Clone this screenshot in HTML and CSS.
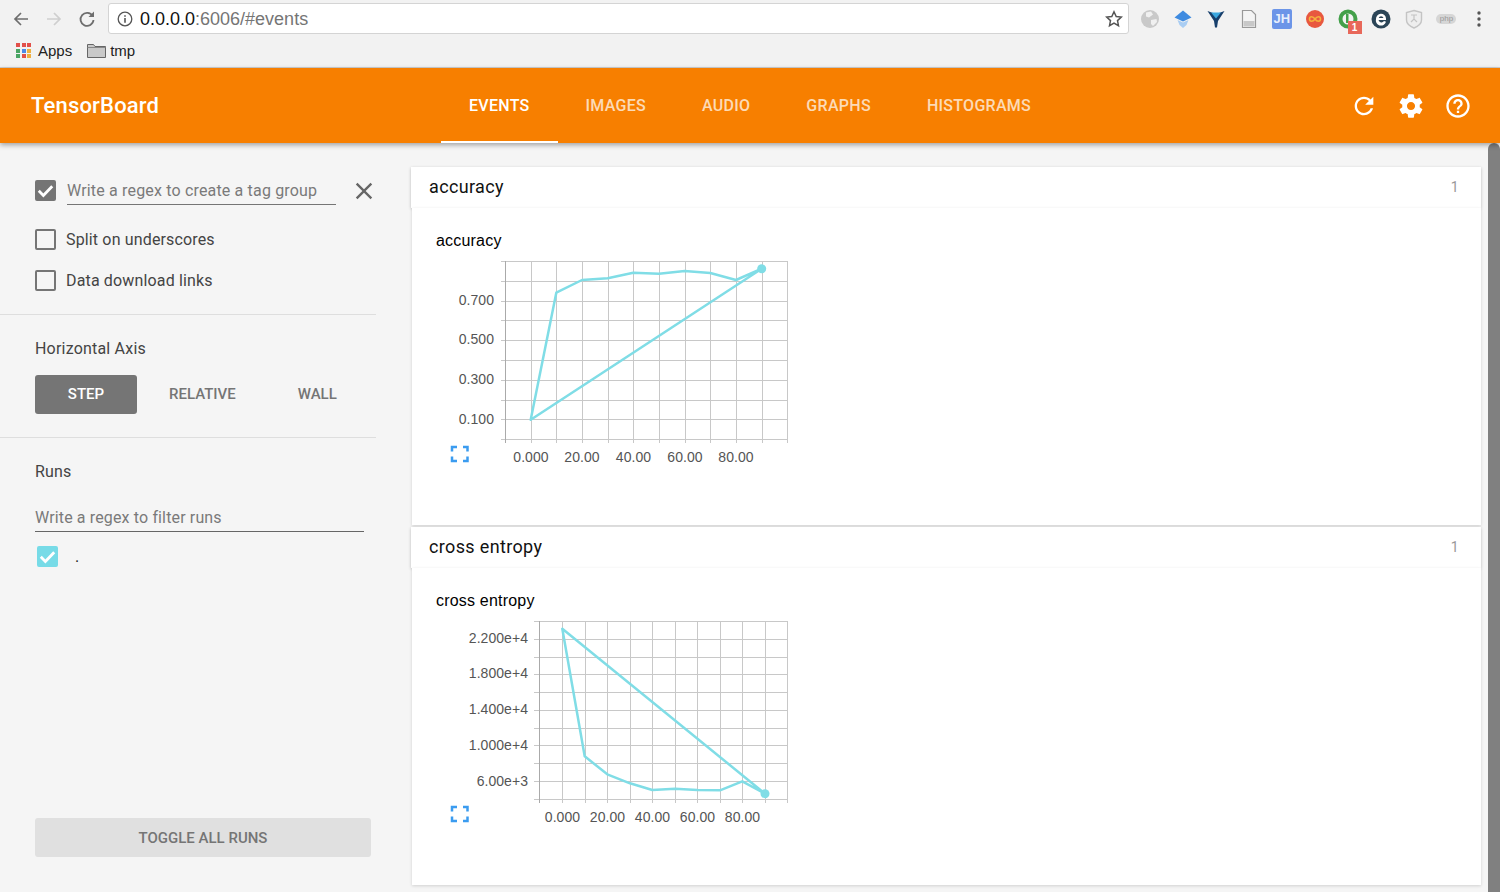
FILE: index.html
```html
<!DOCTYPE html>
<html lang="en">
<head>
<meta charset="utf-8">
<title>TensorBoard</title>
<link rel="stylesheet" href="styles.css">
</head>
<body>
<div class="browser">
  <div class="toolbar">
    <div class="nav">
      <svg class="nav-icon" viewBox="0 0 18 18"><path d="M16 9H3M9 3L3 9l6 6" fill="none" stroke="#6e6e6e" stroke-width="1.7"/></svg>
      <svg class="nav-icon" viewBox="0 0 18 18"><path d="M2 9h13M9 3l6 6-6 6" fill="none" stroke="#cfcfcf" stroke-width="1.7"/></svg>
      <svg class="nav-icon" viewBox="0 0 18 18"><path d="M14.6 6A6.5 6.5 0 1 0 15.5 10" fill="none" stroke="#6e6e6e" stroke-width="1.8"/><path d="M16 1.5V7h-5.5z" fill="#6e6e6e"/></svg>
    </div>
    <div class="omnibox">
      <svg class="info" viewBox="0 0 16 16"><circle cx="8" cy="8" r="6.8" fill="none" stroke="#555" stroke-width="1.3"/><path d="M7.2 7h1.6v4.8H7.2zM7.2 4.2h1.6v1.6H7.2z" fill="#555"/></svg>
      <span class="url"><span class="host">0.0.0.0</span>:6006/#events</span>
      <svg class="star" viewBox="0 0 18 18"><path d="M9 1.8l2.2 4.7 5.1.6-3.8 3.5 1 5.1L9 13.2l-4.5 2.5 1-5.1-3.8-3.5 5.1-.6z" fill="none" stroke="#555" stroke-width="1.5"/></svg>
    </div>
    <div class="extensions">
      <svg class="ext" viewBox="0 0 20 20"><circle cx="10" cy="10" r="9" fill="#c9c9c9"/><path d="M6 3.500l5-1 2 3-4 3-3-1zM11 11l5.500-1 .5 3-4 4-2-2z" fill="#f0f0f0"/></svg>
      <svg class="ext" viewBox="0 0 20 20"><path d="M10 1.500l8.500 7-8.500 4-8.500-4z" fill="#3f8be0"/><path d="M4.500 11l5.500 2.500 5.500-2.500-2 5-3.500 3-3.500-3z" fill="#a9cdf3"/></svg>
      <svg class="ext" viewBox="0 0 20 20"><path d="M1.500 2l5.500 2 3 3 3-3 5.500-2-6.500 10-1 6.500h-2l-1-6.500z" fill="#173f6c"/><path d="M5 3.500h10l-5 6z" fill="#3aa7e0"/></svg>
      <svg class="ext" viewBox="0 0 20 20"><path d="M3.500 1.500h9l4 4v13h-13z" fill="#f4f4f4" stroke="#999" stroke-width="1.2"/><path d="M4.500 12h11v5.500h-11z" fill="#c8c8c8"/></svg>
      <span class="ext-jh">JH</span>
      <svg class="ext" viewBox="0 0 20 20"><circle cx="10" cy="10" r="9" fill="#e8583f"/><path d="M10 10c-2-3-5.500-3-5.500 0s3.500 3 5.500 0c2-3 5.500-3 5.500 0s-3.500 3-5.500 0z" fill="none" stroke="#f5b13d" stroke-width="1.6"/></svg>
      <span class="ext-badged">
        <svg class="ext" viewBox="0 0 20 20"><circle cx="10" cy="10" r="7.500" fill="none" stroke="#43a04a" stroke-width="4"/><path d="M8 5h2.500v9H8z" fill="#43a04a"/></svg>
        <span class="badge">1</span>
      </span>
      <svg class="ext" viewBox="0 0 20 20"><circle cx="10" cy="10" r="9.500" fill="#2b4557"/><path d="M5 10a5 5 0 0 1 10-.5V11H7.500a3 3 0 0 0 5.500 1l2 .8A5 5 0 0 1 5 10zm2.700-1h4.800a2.500 2.500 0 0 0-4.800 0z" fill="#fff"/></svg>
      <svg class="ext" viewBox="0 0 20 20"><path d="M10 1.500l7.500 2v7.500c0 4-4 6.500-7.500 8-3.500-1.500-7.500-4-7.500-8V3.500z" fill="#eee" stroke="#c4c4c4" stroke-width="1.400"/><path d="M7 6h6M10 6v4M7 13l3-3 3 3" fill="none" stroke="#c4c4c4" stroke-width="1.200"/></svg>
      <span class="ext-php">php</span>
      <svg class="ext" viewBox="0 0 20 20"><circle cx="10" cy="4" r="1.700" fill="#555"/><circle cx="10" cy="10" r="1.700" fill="#555"/><circle cx="10" cy="16" r="1.700" fill="#555"/></svg>
    </div>
  </div>
  <div class="bookmarks">
    <span class="bookmark">
      <span class="apps-grid">
        <i class="dot red"></i><i class="dot red"></i><i class="dot red"></i>
        <i class="dot green"></i><i class="dot blue"></i><i class="dot yellow"></i>
        <i class="dot green"></i><i class="dot red"></i><i class="dot yellow"></i>
      </span>
      Apps
    </span>
    <span class="bookmark folder-mark">
      <svg class="folder" viewBox="0 0 19 15"><path d="M.5 1.500h6l1.500 2h10.500v11H.5z" fill="#c9c9c9" stroke="#666"/><path d="M.5 4.500h18" stroke="#888"/></svg>
      tmp
    </span>
  </div>
</div>

<header class="app-header">
  <div class="brand">TensorBoard</div>
  <nav class="tabs">
    <a class="tab active">EVENTS</a>
    <a class="tab">IMAGES</a>
    <a class="tab">AUDIO</a>
    <a class="tab">GRAPHS</a>
    <a class="tab">HISTOGRAMS</a>
  </nav>
  <div class="header-actions">
    <svg class="action" viewBox="0 0 24 24"><path d="M17.65 6.35C16.2 4.9 14.21 4 12 4c-4.42 0-7.99 3.58-7.99 8s3.57 8 7.99 8c3.73 0 6.84-2.55 7.73-6h-2.08c-.82 2.33-3.04 4-5.65 4-3.31 0-6-2.69-6-6s2.69-6 6-6c1.66 0 3.14.69 4.22 1.78L13 11h7V4l-2.35 2.35z"/></svg>
    <svg class="action" viewBox="0 0 24 24"><path d="M19.43 12.98c.04-.32.07-.64.07-.98s-.03-.66-.07-.98l2.11-1.65c.19-.15.24-.42.12-.64l-2-3.46c-.12-.22-.39-.3-.61-.22l-2.49 1c-.52-.4-1.08-.73-1.69-.98l-.38-2.65C14.46 2.18 14.25 2 14 2h-4c-.25 0-.46.18-.49.42l-.38 2.65c-.61.25-1.17.59-1.69.98l-2.49-1c-.23-.09-.49 0-.61.22l-2 3.46c-.13.22-.07.49.12.64l2.11 1.65c-.04.32-.07.65-.07.98s.03.66.07.98l-2.11 1.65c-.19.15-.24.42-.12.64l2 3.46c.12.22.39.3.61.22l2.49-1c.52.4 1.08.73 1.69.98l.38 2.65c.03.24.24.42.49.42h4c.25 0 .46-.18.49-.42l.38-2.65c.61-.25 1.17-.59 1.69-.98l2.49 1c.23.09.49 0 .61-.22l2-3.46c.12-.22.07-.49-.12-.64l-2.11-1.65zM12 15.5c-1.93 0-3.5-1.57-3.5-3.5s1.57-3.5 3.5-3.5 3.5 1.57 3.5 3.5-1.57 3.5-3.5 3.5z"/></svg>
    <svg class="action" viewBox="0 0 24 24"><path d="M11 18h2v-2h-2v2zm1-16C6.48 2 2 6.48 2 12s4.480 10 10 10 10-4.480 10-10S17.520 2 12 2zm0 18c-4.410 0-8-3.590-8-8s3.590-8 8-8 8 3.590 8 8-3.590 8-8 8zm0-14c-2.210 0-4 1.790-4 4h2c0-1.100.9-2 2-2s2 .9 2 2c0 2-3 1.750-3 5h2c0-2.250 3-2.500 3-5 0-2.210-1.790-4-4-4z"/></svg>
  </div>
</header>

<div class="workspace">
  <aside class="sidebar">
    <section class="panel panel-tags">
      <div class="regex-row">
        <span class="check checked"><svg viewBox="0 0 24 24"><path d="M2.500 12.500l6.500 6.500L21.500 6" fill="none" stroke="#fff" stroke-width="4"/></svg></span>
        <span class="regex-input">Write a regex to create a tag group</span>
        <svg class="close" viewBox="0 0 24 24"><path d="M19 6.410L17.590 5 12 10.590 6.410 5 5 6.410 10.590 12 5 17.590 6.410 19 12 13.410 17.590 19 19 17.590 13.410 12z"/></svg>
      </div>
      <label class="option"><span class="check"></span>Split on underscores</label>
      <label class="option"><span class="check"></span>Data download links</label>
    </section>
    <section class="panel panel-axis">
      <h3 class="panel-title">Horizontal Axis</h3>
      <div class="axis-buttons">
        <span class="axis-btn selected">STEP</span>
        <span class="axis-btn relative">RELATIVE</span>
        <span class="axis-btn wall">WALL</span>
      </div>
    </section>
    <section class="panel-runs">
      <h3 class="panel-title">Runs</h3>
      <div class="runs-input">Write a regex to filter runs</div>
      <div class="run-row">
        <span class="check run-check"><svg viewBox="0 0 24 24"><path d="M2.500 12.500l6.500 6.500L21.500 6" fill="none" stroke="#fff" stroke-width="4"/></svg></span>
        <span class="run-name">.</span>
      </div>
    </section>
    <button class="toggle-runs">TOGGLE ALL RUNS</button>
  </aside>

  <main class="content">
    <section class="category">
      <div class="category-head"><span>accuracy</span><span class="count">1</span></div>
      <div class="category-body">
        <div class="chart-title">accuracy</div>
        <svg class="chart" viewBox="436 255 364 215">
          <path class="grid" d="M505.500 261V443M531.500 261V443M556.500 261V443M582.500 261V443M608.500 261V443M633.500 261V443M659.500 261V443M685.500 261V443M710.500 261V443M736.500 261V443M762.500 261V443M787.500 261V443M501 261.500H788M501 281.500H788M501 301.500H788M501 320.500H788M501 340.500H788M501 360.500H788M501 380.500H788M501 400.500H788M501 419.500H788M501 439.500H788"/>
          <path class="axis" d="M505.500 261V443"/>
          <text class="tick end" x="494" y="305">0.700</text>
          <text class="tick end" x="494" y="344">0.500</text>
          <text class="tick end" x="494" y="384">0.300</text>
          <text class="tick end" x="494" y="424">0.100</text>
          <text class="tick mid" x="531" y="462">0.000</text>
          <text class="tick mid" x="582" y="462">20.00</text>
          <text class="tick mid" x="633.500" y="462">40.00</text>
          <text class="tick mid" x="685" y="462">60.00</text>
          <text class="tick mid" x="736" y="462">80.00</text>
          <path class="series" d="M530.700 419.700L556.300 292.700 582 280 607.700 278.300 633.300 272.700 659 273.700 684.700 271 710.300 273 736 280 761.700 268.700Z"/>
          <circle class="series-dot" cx="761.700" cy="268.700" r="4.500"/>
          <path class="expand" d="M452 451.500V447H457M463 447H467.500V451.500M452 456.500V461H457M463 461H467.500V456.500"/>
        </svg>
      </div>
    </section>
    <section class="category">
      <div class="category-head"><span>cross entropy</span><span class="count">1</span></div>
      <div class="category-body">
        <div class="chart-title">cross entropy</div>
        <svg class="chart" viewBox="436 615 364 215">
          <path class="grid" d="M539.500 621V803M562.500 621V803M585.500 621V803M607.500 621V803M630.500 621V803M652.500 621V803M675.500 621V803M697.500 621V803M720.500 621V803M742.500 621V803M765.500 621V803M787.500 621V803M534 621.500H788M534 639.500H788M534 657.500H788M534 674.500H788M534 692.500H788M534 710.500H788M534 728.500H788M534 745.500H788M534 763.500H788M534 781.500H788M534 799.500H788"/>
          <path class="axis" d="M539.500 621V803"/>
          <text class="tick end" x="528" y="643">2.200e+4</text>
          <text class="tick end" x="528" y="678">1.800e+4</text>
          <text class="tick end" x="528" y="714">1.400e+4</text>
          <text class="tick end" x="528" y="750">1.000e+4</text>
          <text class="tick end" x="528" y="786">6.00e+3</text>
          <text class="tick mid" x="562.500" y="822">0.000</text>
          <text class="tick mid" x="607.500" y="822">20.00</text>
          <text class="tick mid" x="652.500" y="822">40.00</text>
          <text class="tick mid" x="697.500" y="822">60.00</text>
          <text class="tick mid" x="742.500" y="822">80.00</text>
          <path class="series" d="M562.300 628.700L584.700 756.300 607.300 774.300 630 783.300 652.300 790 675 788.700 697.300 790 720 790.300 742.300 781.300 765 793.700Z"/>
          <circle class="series-dot" cx="765" cy="793.700" r="4.500"/>
          <path class="expand" d="M452 811.500V807H457M463 807H467.500V811.500M452 816.500V821H457M463 821H467.500V816.500"/>
        </svg>
      </div>
    </section>
  </main>

  <div class="scrollbar"></div>
</div>
</body>
</html>
```

FILE: styles.css
```css
* { box-sizing: border-box; }

html, body { margin: 0; height: 100%; }

body {
  display: flex;
  flex-direction: column;
  height: 892px;
  overflow: hidden;
  background: #f5f5f5;
  font-family: Roboto, "Liberation Sans", sans-serif;
  color: #333;
}

/* Browser chrome */
.browser {
  flex: none;
  height: 68px;
  background: #f2f2f2;
  border-bottom: 1px solid #cfcfcf;
}

.toolbar {
  display: flex;
  align-items: center;
  height: 37px;
  padding-left: 4px;
}

.nav { display: flex; width: 104px; gap: 0; padding-top: 1px; }

.nav-icon { width: 18px; height: 18px; margin: 0 7.500px; }

.omnibox {
  display: flex;
  align-items: center;
  width: 1021px;
  height: 31px;
  padding: 0 5px 0 8px;
  background: #fff;
  border: 1px solid #d4d4d4;
  border-radius: 3px;
}

.info { width: 16px; height: 16px; }

.url {
  flex: 1;
  margin-left: 7px;
  padding-top: 1px;
  font: 18px "Liberation Sans", Arial, sans-serif;
  color: #757575;
}

.host { color: #111; }

.star { width: 18px; height: 18px; }

.extensions {
  display: flex;
  align-items: center;
  padding-left: 11px;
  gap: 12.950px;
}

.ext { display: block; width: 20px; height: 20px; }

.ext-jh {
  width: 20px;
  height: 20px;
  background: #6c95e8;
  border-radius: 2px;
  color: #e8effc;
  font: bold 13px/20px "Liberation Sans", sans-serif;
  text-align: center;
}

.ext-badged { position: relative; display: block; width: 20px; height: 20px; }

.badge {
  position: absolute;
  left: 10px;
  top: 12px;
  width: 14px;
  height: 13px;
  background: #e8685a;
  color: #fff;
  font: bold 10px/13px "Liberation Sans", sans-serif;
  text-align: center;
}

.ext-php {
  width: 20px;
  height: 10px;
  background: #d6d6d6;
  border-radius: 5px;
  color: #999;
  font: 8px/10px "Liberation Sans", sans-serif;
  text-align: center;
}

.bookmarks {
  display: flex;
  align-items: center;
  height: 27px;
  padding-left: 16px;
  font: 15px "Liberation Sans", Arial, sans-serif;
  color: #222;
}

.bookmark { display: flex; align-items: center; }

.folder-mark { margin-left: 15px; }

.apps-grid {
  display: grid;
  grid-template-columns: repeat(3, 4px);
  gap: 1.500px;
  margin-right: 7px;
}

.dot { display: block; width: 4px; height: 4px; }
.red { background: #e2504a; }
.green { background: #4aa564; }
.blue { background: #4d8ae8; }
.yellow { background: #efb040; }

.folder { width: 19px; height: 15px; margin-right: 4px; }

/* App header */
.app-header {
  flex: none;
  position: relative;
  z-index: 2;
  display: flex;
  align-items: stretch;
  height: 75px;
  padding-left: 31px;
  background: #f77f00;
  box-shadow: 0 2px 5px rgba(0, 0, 0, 0.35);
  color: #fff;
}

.brand {
  width: 410px;
  font-size: 22px;
  font-weight: 500;
  letter-spacing: 0.18px;
  line-height: 75px;
}

.tabs { display: flex; }

.tab {
  padding: 0 28px;
  font-size: 16px;
  font-weight: 500;
  letter-spacing: 0.28px;
  line-height: 75px;
  color: rgba(255, 255, 255, 0.72);
}

.tab.active {
  color: #fff;
  border-bottom: 2px solid #fff;
}

.header-actions {
  display: flex;
  align-items: center;
  gap: 19px;
  margin-left: auto;
  padding-right: 28px;
}

.action { width: 28px; height: 28px; fill: #fff; }

/* Workspace */
.workspace { flex: 1; display: flex; min-height: 0; }

.sidebar {
  flex: none;
  display: flex;
  flex-direction: column;
  width: 376px;
  padding-bottom: 35px;
}

.panel { border-bottom: 1px solid #dedede; }

.panel-tags { height: 172px; padding: 37px 0 0 35px; }

.panel-axis { height: 123px; padding: 22px 0 0 35px; }

.panel-runs { padding: 22px 0 0 35px; }

.check {
  flex: none;
  display: block;
  width: 21px;
  height: 21px;
  border: 2px solid #757575;
  border-radius: 2px;
}

.check svg { display: block; width: 100%; height: 100%; }

.check.checked { background: #757575; }

.regex-row { display: flex; align-items: flex-start; height: 49px; }

.regex-input {
  flex: none;
  width: 269px;
  height: 25px;
  margin-left: 11px;
  border-bottom: 1px solid #757575;
  font-size: 16px;
  letter-spacing: 0.17px;
  line-height: 21px;
  color: #7a7a7a;
}

.close { flex: none; width: 28px; height: 28px; margin: -3px 0 0 14px; fill: #666; }

.option {
  display: flex;
  align-items: center;
  gap: 10px;
  height: 21px;
  margin-bottom: 20px;
  font-size: 16px;
  letter-spacing: 0.15px;
  color: #444;
}

.panel-title {
  margin: 0;
  font-size: 16px;
  font-weight: 400;
  letter-spacing: 0.2px;
  line-height: 24px;
  color: #444;
}

.axis-buttons { display: flex; margin-top: 14px; }

.axis-btn {
  height: 39px;
  font-size: 15px;
  font-weight: 500;
  line-height: 39px;
  color: #757575;
}

.axis-btn.selected {
  width: 102px;
  background: #757575;
  border-radius: 3px;
  color: #fff;
  text-align: center;
}

.axis-btn.relative { margin-left: 32px; }

.axis-btn.wall { margin-left: 62px; }

.runs-input {
  width: 329px;
  height: 26px;
  margin-top: 22px;
  border-bottom: 1px solid #666;
  font-size: 16px;
  letter-spacing: 0.14px;
  line-height: 24px;
  color: #7a7a7a;
}

.run-row { display: flex; align-items: center; margin: 14px 0 0 2px; }

.run-check { background: #77dbe7; border-color: #77dbe7; }

.run-name { margin-left: 17px; font-size: 16px; color: #222; }

.toggle-runs {
  width: 336px;
  height: 39px;
  margin: auto 0 0 35px;
  padding: 0;
  border: 0;
  border-radius: 3px;
  background: #e0e0e0;
  font: 500 15px Roboto, sans-serif;
  color: #757575;
}

.content { flex: none; width: 1105px; padding: 24px 0 0 35px; }

.category-head {
  display: flex;
  justify-content: space-between;
  align-items: center;
  height: 41px;
  padding: 0 22px 2px 18px;
  background: #fff;
  box-shadow: 0 1px 3px rgba(0, 0, 0, 0.24);
  font-size: 18px;
  letter-spacing: 0.35px;
  color: #111;
}

.count { font-size: 14px; color: #999; }

.category-body {
  height: 317px;
  margin: 0 0 2px 1px;
  padding: 21px 0 0 24px;
  background: #fff;
  box-shadow: 0 1px 3px rgba(0, 0, 0, 0.15);
}

.chart-title {
  height: 23px;
  font: 16px/23px "Liberation Sans", Arial, sans-serif;
  letter-spacing: 0.2px;
  color: #000;
}

.chart { display: block; width: 364px; height: 215px; margin-top: 3px; }

.grid { fill: none; stroke: #c8c8c8; stroke-width: 1; }

.axis { fill: none; stroke: #aaa; stroke-width: 1; }

.tick { font: 14px "Liberation Sans", Arial, sans-serif; letter-spacing: 0.05px; fill: #555; }

.end { text-anchor: end; }

.mid { text-anchor: middle; }

.series { fill: none; stroke: #80dde6; stroke-width: 2.500; stroke-linejoin: round; }

.series-dot { fill: #80dde6; }

.expand { fill: none; stroke: #3b9cf0; stroke-width: 2.500; }

.scrollbar {
  flex: none;
  width: 12px;
  margin-left: 7px;
  background: #808080;
  border-radius: 6px 6px 0 0;
}
```
